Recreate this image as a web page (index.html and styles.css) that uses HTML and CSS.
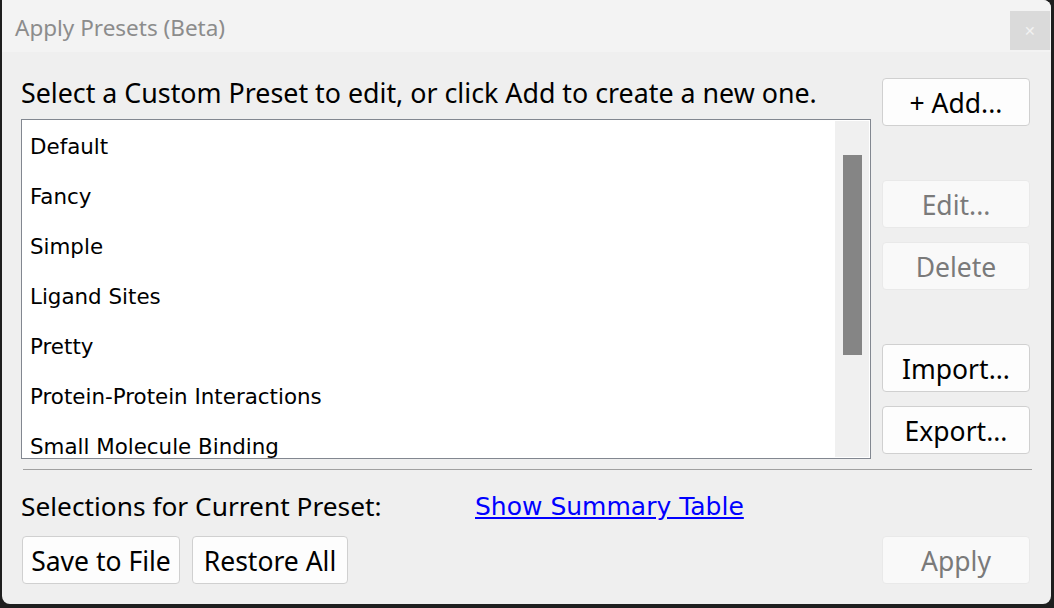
FILE: index.html
```html
<!DOCTYPE html>
<html>
<head>
<meta charset="utf-8">
<link rel="stylesheet" href="styles.css">
</head>
<body>
<div class="window">
  <div class="titlebar">
    <span class="title">Apply Presets (Beta)</span>
    <span class="close">&#x2715;</span>
  </div>
  <div class="content">
    <div class="top">
      <div class="left">
        <div class="instr">Select a Custom Preset to edit, or click Add to create a new one.</div>
        <div class="listbox">
          <ul class="items">
            <li>Default</li>
            <li>Fancy</li>
            <li>Simple</li>
            <li>Ligand Sites</li>
            <li>Pretty</li>
            <li>Protein-Protein Interactions</li>
            <li>Small Molecule Binding</li>
          </ul>
          <div class="scroll"><div class="thumb"></div></div>
        </div>
      </div>
      <div class="side">
        <button class="btn">+ Add...</button>
        <button class="btn dis mt-edit">Edit...</button>
        <button class="btn dis mt-del">Delete</button>
        <button class="btn mt-imp">Import...</button>
        <button class="btn mt-exp">Export...</button>
      </div>
    </div>
    <div class="sep"></div>
    <div class="selrow">
      <span class="sellabel">Selections for Current Preset:</span>
      <a class="link" href="#">Show Summary Table</a>
    </div>
    <div class="bottom">
      <button class="btn save">Save to File</button>
      <button class="btn restore">Restore All</button>
      <span class="spacer"></span>
      <button class="btn dis apply">Apply</button>
    </div>
  </div>
</div>
</body>
</html>
```
FILE: styles.css
```css
html, body {
  margin: 0;
  padding: 0;
  background: #1e1e1e;
  width: 1054px;
  height: 608px;
  overflow: hidden;
  font-family: "Noto Sans", "Open Sans", sans-serif;
}
.window {
  margin-left: 2px;
  width: 1049px;
  height: 604px;
  background: #efefef;
  border-radius: 0 8px 8px 8px;
  overflow: hidden;
  display: flex;
  flex-direction: column;
}
.titlebar {
  height: 52px;
  background: #f3f3f3;
  display: flex;
  align-items: center;
  justify-content: space-between;
  flex: none;
}
.title {
  margin-left: 13px;
  margin-top: 2px;
  font-size: 22.5px;
  color: #8c8c8c;
}
.close {
  width: 40px;
  height: 39px;
  margin-top: 8px;
  margin-right: 1px;
  background: #dadada;
  color: #f2f2f2;
  font-size: 14px;
  display: flex;
  align-items: center;
  justify-content: center;
}
.content {
  padding: 26px 19px 0 19px;
  display: flex;
  flex-direction: column;
}
.top {
  display: flex;
  justify-content: space-between;
}
.left {
  display: flex;
  flex-direction: column;
}
.instr {
  font-size: 26.8px;
  color: #000;
  line-height: 30px;
  margin-top: 0;
  height: 41px;
}
.listbox {
  width: 848px;
  height: 338px;
  border: 1px solid #828790;
  background: #fff;
  display: flex;
  justify-content: space-between;
}
.items {
  list-style: none;
  margin: 0;
  padding: 0 0 0 8px;
  font-family: "DejaVu Sans", sans-serif;
  font-size: 21.4px;
  overflow: hidden;
}
.items li {
  height: 50px;
  line-height: 54px;
}
.scroll {
  width: 34px;
  background: #f0f0f0;
  margin: 1px 1px 1px 0;
  display: flex;
  justify-content: center;
}
.thumb {
  width: 19px;
  height: 200px;
  margin-top: 34px;
  background: #858585;
}
.side {
  display: flex;
  flex-direction: column;
  width: 148px;
  margin-right: 2px;
}
.btn {
  font-family: "Noto Sans", "Open Sans", sans-serif;
  font-size: 26.5px;
  color: #000;
  background: #fdfdfd;
  border: 1px solid #d0d0d0;
  border-radius: 4px;
  height: 48px;
  padding: 2px 0 0 0;
  display: flex;
  align-items: center;
  justify-content: center;
}
.side .btn {
  width: 148px;
}
.btn.dis {
  background: #f9f9f9;
  border-color: #e9e9e9;
  color: #7a7a7a;
}
.mt-edit { margin-top: 54px; }
.mt-del { margin-top: 14px; }
.mt-imp { margin-top: 54px; }
.mt-exp { margin-top: 14px; }
.sep {
  height: 1px;
  background: #a0a0a0;
  margin-top: 10px;
  width: 1009px;
  margin-left: 2px;
}
.selrow {
  display: flex;
  align-items: center;
  height: 40px;
  margin-top: 16px;
  margin-left: 0;
}
.sellabel {
  font-size: 26.3px;
  width: 454px;
}
.link {
  font-family: "DejaVu Sans", sans-serif;
  font-size: 25px;
  color: #0000ff;
  text-decoration: underline;
}
.bottom {
  display: flex;
  margin-top: 10px;
  margin-left: 1px;
}
.save { width: 158px; }
.restore { width: 156px; margin-left: 12px; }
.spacer { flex: 1; }
.apply { width: 148px; margin-right: 2px; }
```
